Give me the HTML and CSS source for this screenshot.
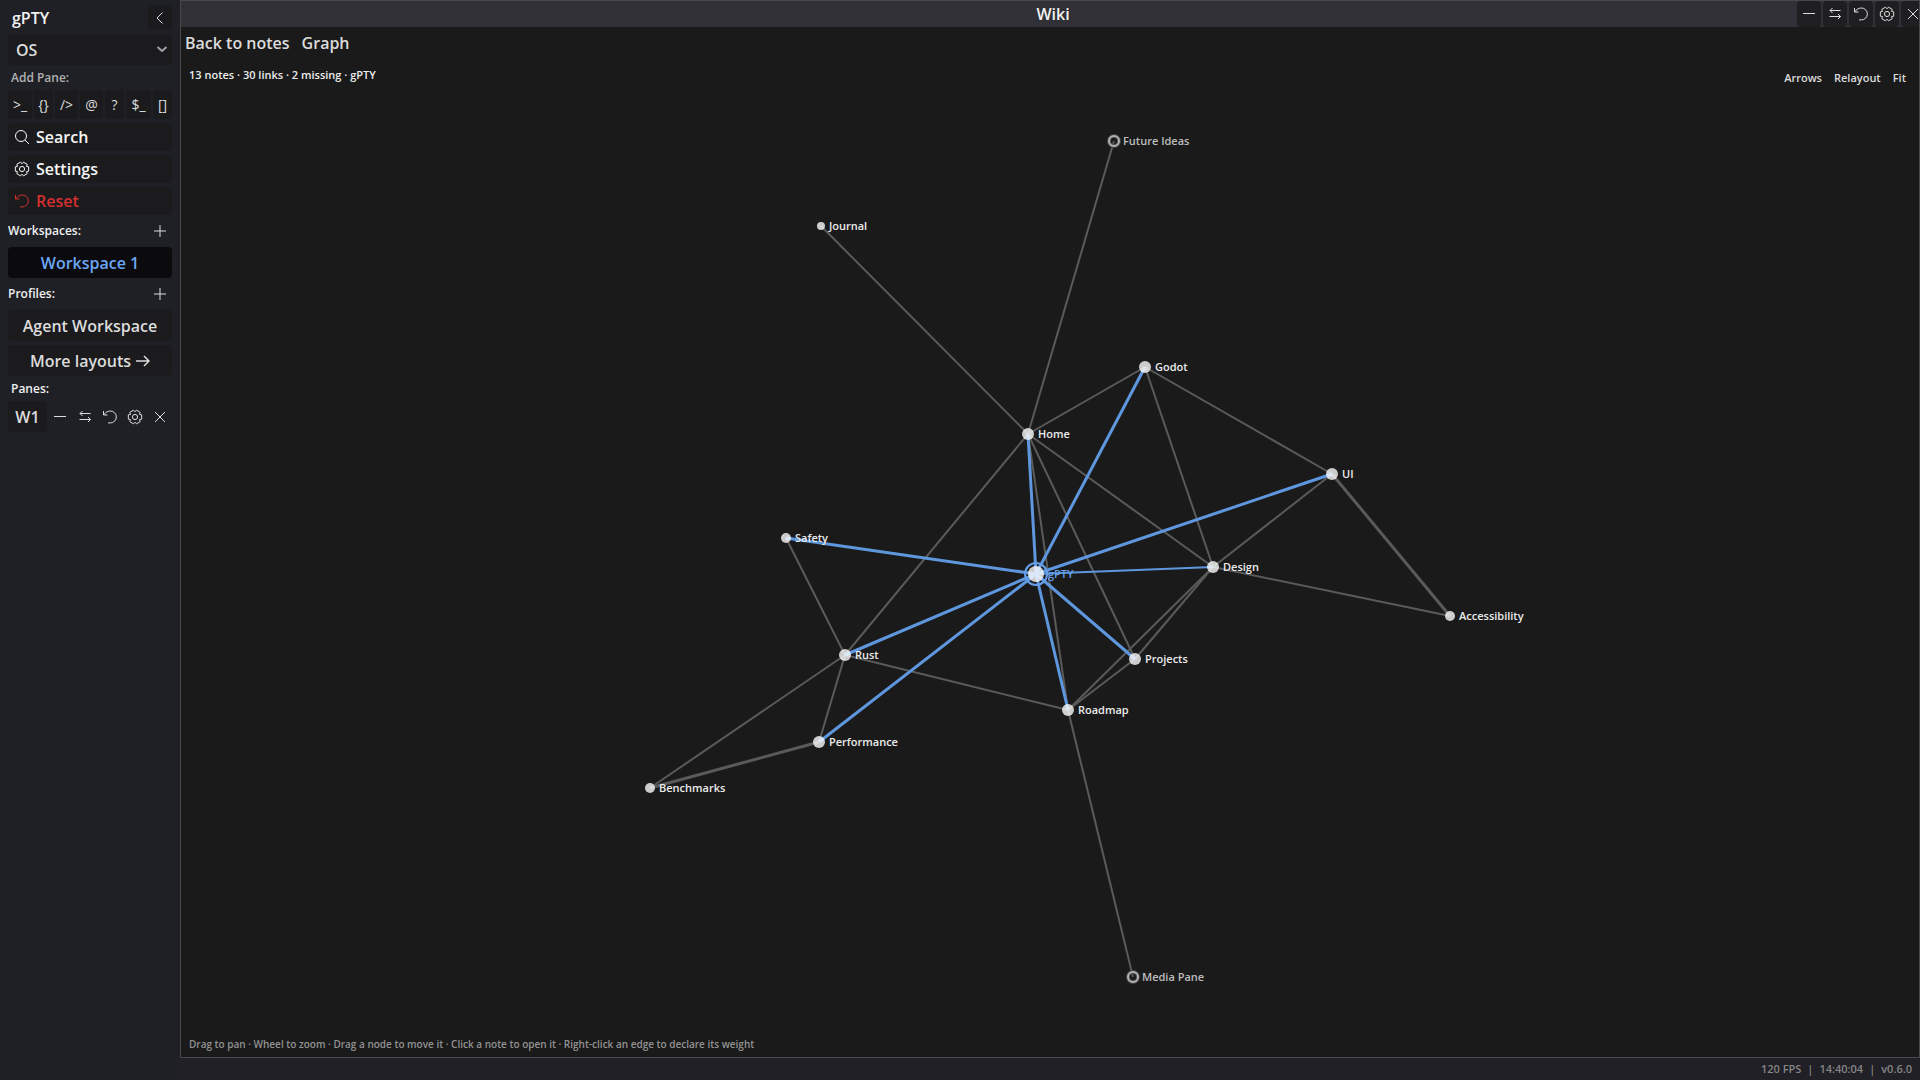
FILE: index.html
```
<!DOCTYPE html>
<html lang="en">
<head>
    <meta charset="UTF-8">
    <meta name="viewport" content="width=device-width, initial-scale=1.0">
    <title>gPTY - Wiki</title>
    <link rel="stylesheet" href="styles.css">
</head>
<body>

<svg class="symbols" aria-hidden="true">
    <symbol id="i-left" viewBox="0 0 16 16"><path d="M10.500 2.500 5 8l5.500 5.500"/></symbol>
    <symbol id="i-down" viewBox="0 0 16 16"><path d="m3.500 6 4.500 4L12.500 6"/></symbol>
    <symbol id="i-search" viewBox="0 0 16 16"><circle cx="7" cy="7" r="5.500"/><path d="m11 11 4 4"/></symbol>
    <symbol id="i-plus" viewBox="0 0 16 16"><path d="M2 8h12M8 2v12"/></symbol>
    <symbol id="i-minus" viewBox="0 0 16 16"><path d="M2 7.500h12"/></symbol>
    <symbol id="i-swap" viewBox="0 0 16 16"><path d="M13.500 4.500H3M5.500 2 3 4.500 5.500 7M2.500 10.500H13.500M11 8l2.500 2.500L11 13"/></symbol>
    <symbol id="i-reset" viewBox="0 0 16 16"><path d="M1.500 2v4h4M1.800 5.800C3.500 3.400 5.700 2 8.400 2a5.900 5.900 0 0 1 0 11.900H6"/></symbol>
    <symbol id="i-gear" viewBox="0 0 16 16"><path d="M14.660 5.840v4.320L12.500 10.600l.7 2.080-3.740 2.170L8 13.200l-1.460 1.650-3.740-2.170.7-2.080-2.160-.44V5.840L3.500 5.400l-.7-2.080 3.740-2.170L8 2.800l1.460-1.650 3.740 2.170-.7 2.080z"/><circle cx="8" cy="8" r="2.600"/></symbol>
    <symbol id="i-close" viewBox="0 0 16 16"><path d="m3 3 10 10M13 3 3 13"/></symbol>
</svg>

<div class="app">
    <aside class="sidebar">
        <div class="row">
            <h1 class="brand">gPTY</h1>
            <button class="btn square" aria-label="Collapse"><svg class="icon"><use href="#i-left"/></svg></button>
        </div>

        <div class="select">
            <select aria-label="System">
                <option>OS</option>
            </select>
            <svg class="icon"><use href="#i-down"/></svg>
        </div>

        <h2 class="label muted inset">Add Pane:</h2>
        <div class="pane-types">
            <button class="btn">&gt;_</button>
            <button class="btn">{}</button>
            <button class="btn">/&gt;</button>
            <button class="btn">@</button>
            <button class="btn">?</button>
            <button class="btn">$_</button>
            <button class="btn">[]</button>
        </div>

        <button class="btn action"><svg class="icon"><use href="#i-search"/></svg>Search</button>
        <button class="btn action"><svg class="icon"><use href="#i-gear"/></svg>Settings</button>
        <button class="btn action danger"><svg class="icon"><use href="#i-reset"/></svg>Reset</button>

        <div class="row">
            <h2 class="label">Workspaces:</h2>
            <button class="ghost square" aria-label="Add workspace"><svg class="icon"><use href="#i-plus"/></svg></button>
        </div>
        <button class="btn wide active">Workspace 1</button>

        <div class="row">
            <h2 class="label">Profiles:</h2>
            <button class="ghost square" aria-label="Add profile"><svg class="icon"><use href="#i-plus"/></svg></button>
        </div>
        <button class="btn wide">Agent Workspace</button>
        <button class="btn wide">More layouts <svg class="arrow" viewBox="0 0 14 14"><path d="M0 7h13M8 2l5 5-5 5"/></svg></button>

        <h2 class="label inset">Panes:</h2>
        <div class="pane-row">
            <button class="btn wide">W1</button>
            <button class="ghost" aria-label="Minimize"><svg class="icon"><use href="#i-minus"/></svg></button>
            <button class="ghost" aria-label="Swap"><svg class="icon"><use href="#i-swap"/></svg></button>
            <button class="ghost" aria-label="Reset"><svg class="icon"><use href="#i-reset"/></svg></button>
            <button class="ghost" aria-label="Settings"><svg class="icon"><use href="#i-gear"/></svg></button>
            <button class="ghost" aria-label="Close"><svg class="icon"><use href="#i-close"/></svg></button>
        </div>
    </aside>

    <div class="workspace">
        <main class="pane">
            <header class="titlebar">
                <h2 class="title">Wiki</h2>
                <div class="window-buttons">
                    <button class="btn square" aria-label="Minimize"><svg class="icon"><use href="#i-minus"/></svg></button>
                    <button class="btn square" aria-label="Swap"><svg class="icon"><use href="#i-swap"/></svg></button>
                    <button class="btn square" aria-label="Reset"><svg class="icon"><use href="#i-reset"/></svg></button>
                    <button class="btn square" aria-label="Settings"><svg class="icon"><use href="#i-gear"/></svg></button>
                    <button class="btn square" aria-label="Close"><svg class="icon"><use href="#i-close"/></svg></button>
                </div>
            </header>
            <nav class="toolbar">
                <button class="ghost">Back to notes</button>
                <button class="ghost">Graph</button>
            </nav>
            <section class="graph">
                <svg id="graph" class="graph-canvas" viewBox="181 58 1738 999"></svg>
                <p class="stats">13 notes · 30 links · 2 missing · gPTY</p>
                <div class="graph-tools">
                    <button class="ghost">Arrows</button>
                    <button class="ghost">Relayout</button>
                    <button class="ghost">Fit</button>
                </div>
                <p class="hint">Drag to pan · Wheel to zoom · Drag a node to move it · Click a note to open it · Right-click an edge to declare its weight</p>
            </section>
        </main>
        <footer class="statusbar">
            <span>120 FPS</span><span>|</span><span>14:40:04</span><span>|</span><span>v0.6.0</span>
        </footer>
    </div>
</div>

<script>
    const nodes = {
        "Home": { x: 1028, y: 434, r: 6 },
        "Godot": { x: 1145, y: 367, r: 6 },
        "UI": { x: 1332, y: 474, r: 6 },
        "Design": { x: 1213, y: 567, r: 6 },
        "gPTY": { x: 1036, y: 574, r: 8, current: true },
        "Safety": { x: 786, y: 538, r: 5 },
        "Rust": { x: 845, y: 655, r: 6 },
        "Performance": { x: 819, y: 742, r: 6 },
        "Roadmap": { x: 1068, y: 710, r: 6 },
        "Projects": { x: 1135, y: 659, r: 6 },
        "Accessibility": { x: 1450, y: 616, r: 5 },
        "Benchmarks": { x: 650, y: 788, r: 5 },
        "Journal": { x: 821, y: 226, r: 4 },
        "Future Ideas": { x: 1114, y: 141, r: 5, missing: true },
        "Media Pane": { x: 1133, y: 977, r: 5, missing: true }
    };

    // [from, to, line width]
    const links = [
        ["Home", "Future Ideas", 2], ["Home", "Journal", 2], ["Home", "Godot", 2],
        ["Home", "Design", 2], ["Home", "Projects", 2], ["Home", "Roadmap", 2],
        ["Home", "Rust", 2], ["Godot", "Design", 2], ["Godot", "UI", 2],
        ["UI", "Design", 2], ["UI", "Accessibility", 3], ["Design", "Accessibility", 2],
        ["Design", "Projects", 2], ["Design", "Roadmap", 2], ["Projects", "Roadmap", 2],
        ["Safety", "Rust", 2], ["Rust", "Roadmap", 2], ["Rust", "Benchmarks", 2],
        ["Rust", "Performance", 2], ["Performance", "Benchmarks", 3], ["Roadmap", "Media Pane", 2],
        ["gPTY", "Home", 3], ["gPTY", "Godot", 3], ["gPTY", "UI", 3],
        ["gPTY", "Design", 2], ["gPTY", "Safety", 3], ["gPTY", "Rust", 3],
        ["gPTY", "Performance", 3], ["gPTY", "Roadmap", 3], ["gPTY", "Projects", 3]
    ];

    const graph = document.getElementById("graph");

    function add(tag, className, attrs) {
        const el = document.createElementNS("http://www.w3.org/2000/svg", tag);
        el.setAttribute("class", className);
        for (const key in attrs) {
            el.setAttribute(key, attrs[key]);
        }
        graph.appendChild(el);
        return el;
    }

    links.forEach(([from, to, width]) => {
        const a = nodes[from];
        const b = nodes[to];
        add("line", a.current ? "edge edge-current" : "edge", {
            x1: a.x, y1: a.y, x2: b.x, y2: b.y, "stroke-width": width
        });
    });

    Object.entries(nodes).forEach(([name, n]) => {
        let kind = "";
        if (n.missing) {
            kind = " missing";
            add("circle", "halo", { cx: n.x, cy: n.y, r: n.r });
        }
        if (n.current) {
            kind = " current";
            add("circle", "ring", { cx: n.x, cy: n.y, r: n.r + 3 });
        }
        add("circle", "node" + kind, { cx: n.x, cy: n.y, r: n.r });
        add("text", "node-label" + kind, { x: n.x + n.r + 4, y: n.y + 4 }).textContent = name;
    });
</script>

</body>
</html>
```
FILE: styles.css
```
* {
    box-sizing: border-box;
}
body {
    margin: 0;
    font-family: "Open Sans", "Noto Sans", sans-serif;
    font-size: 16px;
    font-weight: 600;
    color: #dcdcdc;
    background-color: #202026;
}
h1, h2, p {
    margin: 0;
    font-size: inherit;
    font-weight: inherit;
}
button, select {
    font: inherit;
    color: inherit;
    border: none;
    margin: 0;
    padding: 0;
}
.symbols {
    display: none;
}
.icon {
    width: 16px;
    height: 16px;
    flex: none;
    fill: none;
    stroke: currentColor;
    stroke-linejoin: round;
}
.app {
    display: flex;
    height: 100vh;
    overflow: hidden;
}

/* sidebar */
.sidebar {
    width: 180px;
    flex: none;
    padding: 6px 8px;
    display: flex;
    flex-direction: column;
    gap: 4px;
    background-color: #1f2026;
}
.row {
    display: flex;
    align-items: center;
    justify-content: space-between;
    height: 24px;
}
.brand {
    padding-left: 4px;
    color: #f2f2f2;
}
.btn {
    display: flex;
    align-items: center;
    justify-content: center;
    background-color: #1b1b1e;
    border-radius: 4px;
}
.ghost {
    display: flex;
    align-items: center;
    justify-content: center;
    background: none;
}
.square {
    width: 24px;
    height: 24px;
}
.select {
    position: relative;
    height: 31px;
}
.select select {
    width: 100%;
    height: 100%;
    padding: 0 8px;
    appearance: none;
    background-color: #1b1b1e;
    border-radius: 4px;
}
.select .icon {
    position: absolute;
    right: 2px;
    top: 7px;
    color: #a0a0a0;
    stroke-width: 2;
    pointer-events: none;
}
.label {
    font-size: 12px;
    line-height: 17px;
    color: #f0f0f0;
}
.row .label {
    padding-bottom: 2px;
}
.muted {
    color: #b0b0b0;
}
.inset {
    padding-left: 3px;
}
.pane-types {
    display: grid;
    grid-template-columns: 24fr 19fr 23fr 23fr 19fr 25fr 19fr;
    gap: 2px;
    height: 29px;
}
.pane-types .btn {
    min-width: 0;
    font-size: 14px;
    font-weight: 400;
}
.action {
    height: 28px;
    justify-content: flex-start;
    gap: 6px;
    padding-left: 6px;
    color: #f6f6f6;
}
.danger {
    color: #d62f2f;
}
.wide {
    height: 31px;
    gap: 5px;
}
.active {
    color: #6ba6f5;
    background-color: #0b0b0d;
}
.arrow {
    width: 14px;
    height: 14px;
    fill: none;
    stroke: currentColor;
    stroke-width: 1.5;
}
.pane-row {
    display: flex;
}
.pane-row .wide {
    width: 39px;
}
.pane-row .ghost {
    flex: 1;
}

/* wiki pane */
.workspace {
    flex: 1;
    min-width: 0;
    display: flex;
    flex-direction: column;
}
.pane {
    flex: 1;
    min-height: 0;
    display: flex;
    flex-direction: column;
    overflow: hidden;
    border: 1px solid #48484c;
    background-color: #1a1a1a;
}
.titlebar {
    display: grid;
    grid-template-columns: 1fr auto 1fr;
    align-items: center;
    height: 26px;
    margin-right: -6px;
    background-color: #313036;
}
.title {
    grid-column: 2;
    color: #f2f2f2;
}
.window-buttons {
    display: flex;
    justify-content: flex-end;
    gap: 2px;
}
.window-buttons .btn {
    height: 26px;
    background-color: #1f1f22;
}
.toolbar {
    display: flex;
    gap: 12px;
    height: 31px;
    padding-left: 4px;
}
.graph {
    position: relative;
    flex: 1;
    min-height: 0;
}
.graph-canvas {
    display: block;
    width: 100%;
    height: 100%;
}
.stats, .graph-tools, .hint {
    position: absolute;
    line-height: 16px;
}
.stats {
    left: 8px;
    top: 9px;
    font-size: 11px;
    color: #ececec;
}
.graph-tools {
    right: 13px;
    top: 12px;
    display: flex;
    gap: 12px;
    font-size: 11px;
}
.hint {
    left: 8px;
    bottom: 5px;
    font-size: 10px;
    color: #929292;
}
.edge {
    stroke: #5a5a5a;
}
.edge-current {
    stroke: #5f97de;
}
.node {
    fill: #fff;
    opacity: 0.78;
}
.node.missing {
    fill: none;
    stroke: #d0d0d0;
    stroke-width: 2;
}
.halo {
    fill: none;
    stroke: #484848;
    stroke-width: 4;
}
.ring {
    fill: none;
    stroke: #66a0ea;
    stroke-width: 2;
}
.node-label {
    font-size: 11px;
    fill: #ececec;
}
.node-label.missing {
    fill: #bdbdbd;
}
.node-label.current {
    fill: #66a0ea;
}

/* status bar */
.statusbar {
    display: flex;
    justify-content: flex-end;
    align-items: center;
    gap: 6px;
    height: 22px;
    padding: 0 8px 2px 0;
    font-size: 11px;
    color: #858585;
}
```
